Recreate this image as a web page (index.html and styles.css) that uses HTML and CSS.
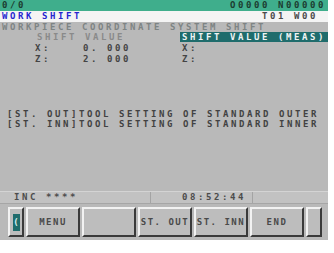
FILE: index.html
```html
<!DOCTYPE html>
<html lang="en">
<head>
    <meta charset="UTF-8">
    <title>Work Shift</title>
    <link rel="stylesheet" href="styles.css">
</head>
<body>

<div class="screen">
    <div class="topbar">
        <span>0/0</span>
        <span>O0000 N00000</span>
    </div>
    <div class="title">
        <span class="title-name">WORK SHIFT</span>
        <span>T01 W00</span>
    </div>

    <div class="main">
        <div class="heading">WORKPIECE COORDINATE SYSTEM SHIFT</div>
        <div class="cols">
            <div class="col col-left">
                <div class="sub">SHIFT VALUE</div>
                <div class="row"><span class="axis">X:</span><span class="val">0. 000</span></div>
                <div class="row"><span class="axis">Z:</span><span class="val">2. 000</span></div>
            </div>
            <div class="col col-right">
                <div class="sub selected">SHIFT VALUE (MEAS)</div>
                <div class="row"><span class="axis">X:</span></div>
                <div class="row"><span class="axis">Z:</span></div>
            </div>
        </div>
        <div class="notes">
            <div>[ST. OUT]TOOL SETTING OF STANDARD OUTER</div>
            <div>[ST. INN]TOOL SETTING OF STANDARD INNER</div>
        </div>
    </div>

    <div class="status">
        <div class="status-mode">INC ****</div>
        <div class="status-time">08:52:44</div>
        <div class="status-rest"></div>
    </div>

    <div class="keys">
        <div class="key key-small"><span class="key-mark">(</span></div>
        <div class="key">MENU</div>
        <div class="key"></div>
        <div class="key">ST. OUT</div>
        <div class="key">ST. INN</div>
        <div class="key">END</div>
        <div class="key key-small"></div>
    </div>
</div>

</body>
</html>
```

FILE: styles.css
```css
body {
    margin: 0;
    background: #ffffff;
    font-family: "DejaVu Sans Mono", "Liberation Mono", monospace;
    font-size: 9px;
    font-weight: bold;
    letter-spacing: 2.58px;
}
.screen {
    width: 328px;
    background: #b9b9b9;
    padding-bottom: 3px;
}
.topbar, .title {
    display: flex;
    justify-content: space-between;
    line-height: 11px;
    padding: 0 2px;
    white-space: nowrap;
}
.topbar {
    background: #3fae8c;
    color: #1c3c30;
}
.title {
    background: #f4f4f4;
    color: #4a4a4a;
    padding-right: 10px;
}
.title-name {
    color: #2626d0;
}
.main {
    height: 169px;
    line-height: 10px;
    white-space: nowrap;
}
.heading {
    color: #7e8484;
    padding-left: 2px;
}
.cols {
    display: flex;
}
.col-left {
    width: 143px;
    padding-left: 35px;
}
.col-right {
    flex: 1;
    padding-left: 2px;
}
.sub {
    color: #8a8a8a;
    padding-left: 2px;
}
.selected {
    background: #1f6c6c;
    color: #eef4f4;
}
.row {
    display: flex;
    color: #444444;
    padding-top: 1px;
}
.col-right .row {
    padding-left: 2px;
}
.axis {
    width: 48px;
}
.notes {
    color: #424242;
    margin-top: 45px;
    padding-left: 7px;
}
.status {
    display: flex;
    height: 11px;
    line-height: 11px;
    background: #c2c2c2;
    border-top: 1px solid #d4d4d4;
    border-bottom: 1px solid #a6a6a6;
    color: #4c4c4c;
    white-space: nowrap;
}
.status-mode {
    width: 136px;
    padding-left: 14px;
    border-right: 1px solid #a4a4a4;
}
.status-time {
    width: 70px;
    padding-left: 31px;
    border-right: 1px solid #a4a4a4;
}
.status-rest {
    flex: 1;
}
.keys {
    display: flex;
    gap: 2px;
    padding: 3px 0 0 8px;
}
.key {
    width: 50px;
    height: 26px;
    line-height: 26px;
    text-align: center;
    white-space: nowrap;
    letter-spacing: 1.5px;
    background: #bdbdbd;
    color: #4a4a4a;
    border-top: 2px solid #f2f2f2;
    border-left: 2px solid #f2f2f2;
    border-right: 2px solid #3a3a3a;
    border-bottom: 2px solid #3a3a3a;
}
.key-small {
    width: 12px;
    display: flex;
    align-items: center;
    justify-content: center;
}
.key-mark {
    display: block;
    width: 7px;
    height: 17px;
    line-height: 17px;
    background: #1f6c6c;
    color: #d8f0f0;
    letter-spacing: 0;
    font-size: 9px;
}
```
